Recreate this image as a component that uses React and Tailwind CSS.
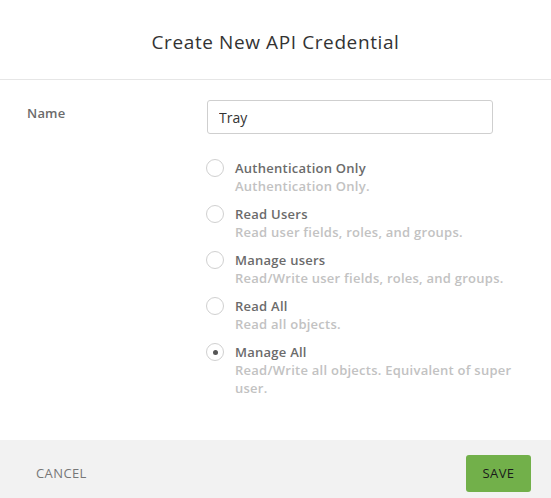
import React, { useState } from 'react';

const scopes = [
    { id: 'auth', title: 'Authentication Only', desc: 'Authentication Only.' },
    { id: 'read-users', title: 'Read Users', desc: 'Read user fields, roles, and groups.' },
    { id: 'manage-users', title: 'Manage users', desc: 'Read/Write user fields, roles, and groups.' },
    { id: 'read-all', title: 'Read All', desc: 'Read all objects.' },
    { id: 'manage-all', title: 'Manage All', desc: 'Read/Write all objects. Equivalent of super user.' },
];

export default function App() {
    const [name, setName] = useState('Tray');
    const [scope, setScope] = useState('manage-all');

    return (
        <div
            className="w-[551px] h-[498px] bg-white flex flex-col overflow-hidden"
            style={{ fontFamily: '"Open Sans", "Liberation Sans", sans-serif' }}
        >
            <div className="h-[80px] shrink-0 border-b border-[#e6e6e6] flex items-center justify-center pt-[6px]">
                <h1 className="text-[19px] text-[#333] tracking-[0.6px]">Create New API Credential</h1>
            </div>

            <div className="px-[27px] pt-[20px]">
                <div className="flex">
                    <label className="w-[180px] pt-[4px] text-[13px] text-[#6b6b6b] font-semibold tracking-[0.2px]">Name</label>
                    <input
                        value={name}
                        onChange={e => setName(e.target.value)}
                        className="w-[286px] h-[34px] border border-[#cfcfcf] rounded-[3px] px-[11px] text-[14px] text-[#333] outline-none"
                    />
                </div>

                <div className="ml-[179px] mt-[25px] flex flex-col gap-[10px]">
                    {scopes.map(s => (
                        <label key={s.id} className="flex cursor-pointer" onClick={() => setScope(s.id)}>
                            <span className="w-[18px] h-[18px] shrink-0 rounded-full border border-[#d0d0d0] flex items-center justify-center">
                                {scope === s.id && <span className="w-[5px] h-[5px] rounded-full bg-[#555]" />}
                            </span>
                            <span className="ml-[11px] flex flex-col text-[13px] leading-[18px] font-semibold tracking-[0.25px]">
                                <span className="text-[#6b6b6b]">{s.title}</span>
                                <span className="text-[#c2c2c2]">{s.desc}</span>
                            </span>
                        </label>
                    ))}
                </div>
            </div>

            <div className="mt-auto h-[58px] bg-[#f2f2f2] flex items-start justify-between pt-[15px] pl-[36px] pr-[20px]">
                <button className="h-[37px] text-[13px] text-[#777] tracking-[0.4px]">CANCEL</button>
                <button className="w-[65px] h-[37px] rounded-[3px] bg-[#72b04a] text-[13px] text-[#1a1a1a] tracking-[0.4px]">
                    SAVE
                </button>
            </div>
        </div>
    );
}
